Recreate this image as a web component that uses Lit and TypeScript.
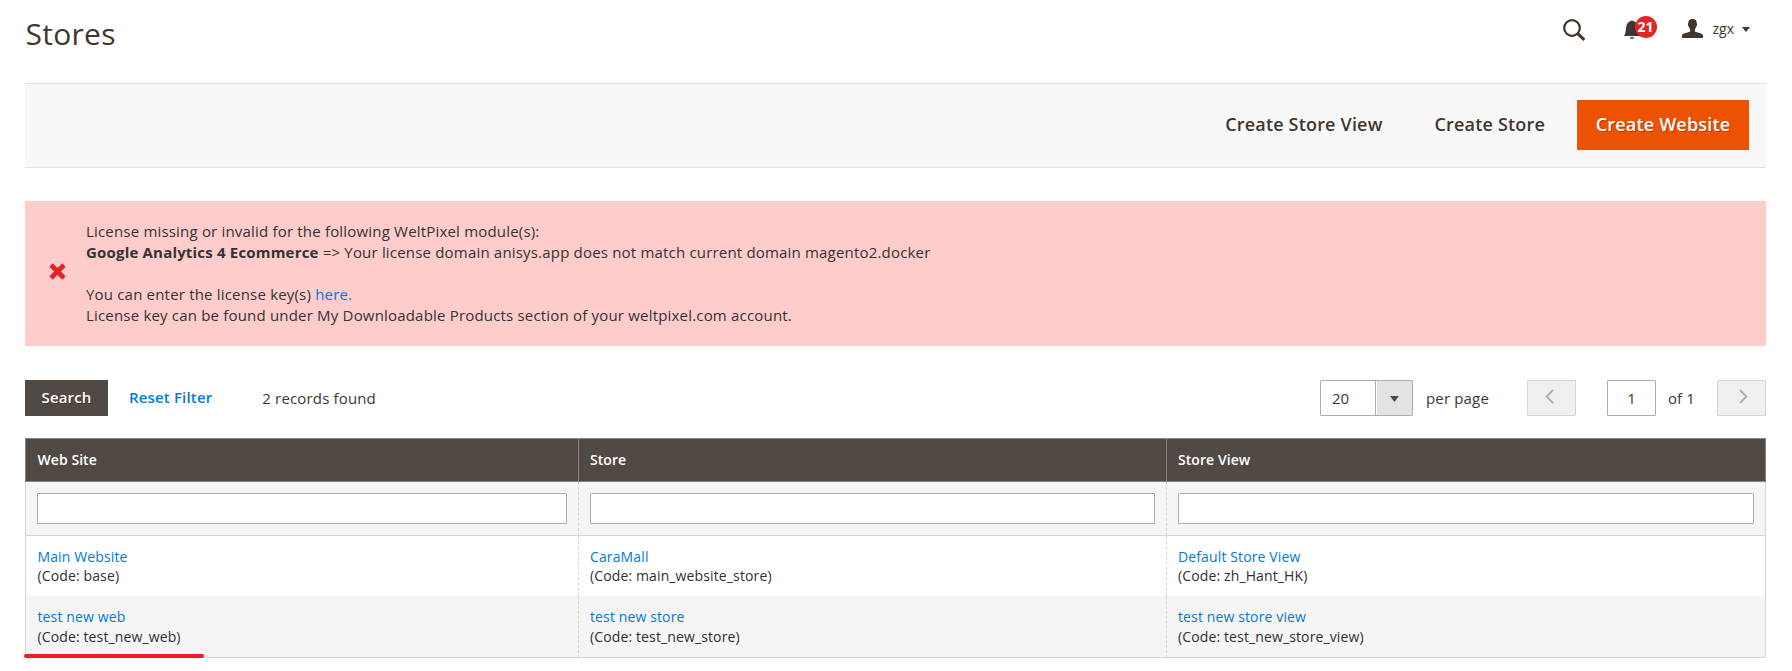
import { LitElement, html, css, svg } from "lit";
import { customElement } from "lit/decorators.js";

interface Entity {
  name: string;
  code: string;
}

const COLUMNS = ["Web Site", "Store", "Store View"];

const ROWS: Entity[][] = [
  [
    { name: "Main Website", code: "base" },
    { name: "CaraMall", code: "main_website_store" },
    { name: "Default Store View", code: "zh_Hant_HK" },
  ],
  [
    { name: "test new web", code: "test_new_web" },
    { name: "test new store", code: "test_new_store" },
    { name: "test new store view", code: "test_new_store_view" },
  ],
];

const chevron = (d: string) => html`<svg class="chevron" viewBox="0 0 9 15" width="9" height="15">
  ${svg`<path d=${d} fill="none" stroke="#adadad" stroke-width="1.8"/>`}
</svg>`;

@customElement("store-header")
export class StoreHeader extends LitElement {
  static styles = css`
    :host { display: flex; justify-content: space-between; height: 83px; color: #41362f; }
    .title { margin: 0; padding: 14px 0 0 0.6px; font-size: 30px; font-weight: 400; line-height: 40px; letter-spacing: 0.25px; }
    .tools { display: flex; align-items: flex-start; padding: 14px 16px 0 0; height: 30px; }
    .search { margin: 5px 38px 0 0; }
    .bell { position: relative; margin: 6px 42px 0 0; width: 16px; height: 20px; }
    .badge {
      position: absolute; left: 11px; top: -4px; width: 22px; height: 22px; border-radius: 50%;
      background: #e22626; color: #fff; font-size: 14px; font-weight: 700; line-height: 22px; text-align: center;
    }
    .user { margin: 5px 10px 0 0; }
    .name { font-size: 14px; line-height: 30px; }
    .caret { margin: 13px 0 0 8px; }
    svg { display: block; }
  `;
  render() {
    return html`
      <h1 class="title">Stores</h1>
      <div class="tools">
        <svg class="search" width="23" height="22" viewBox="0 0 23 22" fill="none" stroke="#41362f">
          <circle cx="9" cy="9" r="7.8" stroke-width="2.2" />
          <path d="M14.5 14.3L21.3 20.8" stroke-width="3" />
        </svg>
        <div class="bell">
          <svg width="16" height="20" viewBox="0 0 16 20" fill="#41362f">
            <path d="M0 16C1.6 13.6 1.7 11 2 8C2.3 4.5 3.8 2.3 6 1.6L6.3 .8H9.7L10 1.6C12.2 2.3 13.7 4.5 14 8C14.3 11 14.4 13.6 16 16Z" />
            <path d="M5.8 17.3H10.2C9.7 19.3 6.3 19.3 5.8 17.3Z" />
          </svg>
          <span class="badge">21</span>
        </div>
        <svg class="user" width="21" height="19" viewBox="0 0 21 19" fill="#41362f">
          <path d="M10.5 0C13.5 0 15 1.7 14.8 4.6C15.4 5 15 7 14.4 7.2C14.1 8.6 13.5 9.5 12.9 10.1V12.4C16 14 21 13.9 21 16.6V19H0V16.6C0 13.9 5 14 8.1 12.4V10.1C7.5 9.5 6.9 8.6 6.6 7.2C6 7 5.6 5 6.2 4.6C6 1.7 7.5 0 10.5 0Z" />
        </svg>
        <span class="name">zgx</span>
        <svg class="caret" width="8" height="5" viewBox="0 0 8 5"><path d="M0 0H8L4 5Z" fill="#41362f" /></svg>
      </div>
    `;
  }
}

@customElement("store-actions")
export class StoreActions extends LitElement {
  static styles = css`
    :host {
      box-sizing: border-box; display: flex; justify-content: flex-end; align-items: flex-start; height: 85px;
      padding: 16px 17px 0 0; background: #f8f8f8; border: solid #e3e3e3; border-width: 1px 0;
    }
    button {
      box-sizing: border-box; height: 50px; padding: 0 0 2px; border: 0; background: none; color: #41362f; font: inherit;
      font-size: 18px; font-weight: 600; letter-spacing: 0.18px; line-height: 48px; white-space: nowrap;
    }
    .view { margin-right: 52px; }
    .store { margin-right: 32px; }
    .primary { width: 172px; background: #eb5202; color: #fff; text-shadow: 1px 1px 0 rgba(0, 0, 0, 0.25); }
  `;
  render() {
    return html`
      <button class="view">Create Store View</button>
      <button class="store">Create Store</button>
      <button class="primary">Create Website</button>
    `;
  }
}

@customElement("license-alert")
export class LicenseAlert extends LitElement {
  static styles = css`
    :host {
      box-sizing: border-box; display: flex; align-items: center; height: 145px; margin-top: 33px;
      padding-left: 24px; background: #ffcccc; color: #333;
    }
    svg { margin: 0 0 4px 0.3px; }
    .text { margin-left: 19.7px; font-size: 15px; line-height: 21px; letter-spacing: 0.188px; }
    .text p { margin: 0; }
    .gap { height: 21px; }
    b { font-weight: 700; }
    a { color: #007bdb; }
  `;
  render() {
    return html`
      <svg width="17" height="17" viewBox="0 0 17 17">
        <path d="M2 2L15 15M15 2L2 15" stroke="#e22626" stroke-width="4.8" />
      </svg>
      <div class="text">
        <p>License missing or invalid for the following WeltPixel module(s):</p>
        <p><b>Google Analytics 4 Ecommerce</b> =&gt; Your license domain anisys.app does not match current domain magento2.docker</p>
        <div class="gap"></div>
        <p>You can enter the license key(s) <a>here.</a></p>
        <p>License key can be found under My Downloadable Products section of your weltpixel.com account.</p>
      </div>
    `;
  }
}

@customElement("grid-controls")
export class GridControls extends LitElement {
  static styles = css`
    :host { display: flex; height: 36px; margin: 34px 0 22px; font-size: 15px; line-height: 36px; color: #41362f; white-space: nowrap; }
    button { box-sizing: border-box; height: 36px; padding: 0 0 2px; border: 0; font: inherit; font-weight: 600; line-height: 34px; letter-spacing: 0.16px; }
    .search { width: 83px; background: #514943; color: #fff; text-shadow: 1px 1px 0 rgba(0, 0, 0, 0.25); }
    .reset { margin-left: 21px; background: none; color: #007bdb; }
    .found { margin-left: 50px; letter-spacing: 0.16px; }
    .pager { display: flex; margin-left: auto; }
    .select { box-sizing: border-box; display: flex; width: 93px; border: 1px solid #adadad; border-radius: 1px; background: #fff; line-height: 34px; }
    .value { flex: 1; padding-left: 11px; }
    .arrow { box-sizing: border-box; display: flex; align-items: center; justify-content: center; width: 37px; padding-top: 2px; background: #e3e3e3; border-left: 1px solid #adadad; box-shadow: inset 1px 0 #fff; }
    .per { box-sizing: border-box; width: 114px; padding-left: 13px; letter-spacing: 0.16px; }
    .nav { display: flex; justify-content: center; width: 49px; padding: 8px 0 0; background: #f0f0f0; border: 1px solid #d6d6d6; border-radius: 1px; }
    .prev { padding-right: 4px; }
    .next { padding-left: 3px; }
    .page { box-sizing: border-box; width: 49px; margin-left: 31px; border: 1px solid #adadad; border-radius: 1px; line-height: 34px; text-align: center; }
    .of { box-sizing: border-box; width: 61px; padding-left: 12px; letter-spacing: 0.1px; }
  `;
  render() {
    return html`
      <button class="search">Search</button>
      <button class="reset">Reset Filter</button>
      <span class="found">2 records found</span>
      <div class="pager">
        <div class="select">
          <span class="value">20</span>
          <span class="arrow"><svg width="9" height="6" viewBox="0 0 9 6"><path d="M0 0H9L4.5 6Z" fill="#514943" /></svg></span>
        </div>
        <span class="per">per page</span>
        <button class="nav prev" aria-label="Previous">${chevron("M8 1L1.6 7.5L8 14")}</button>
        <div class="page">1</div>
        <span class="of">of 1</span>
        <button class="nav next" aria-label="Next">${chevron("M1 1L7.4 7.5L1 14")}</button>
      </div>
    `;
  }
}

@customElement("store-grid")
export class StoreGrid extends LitElement {
  static styles = css`
    :host { position: relative; display: block; font-size: 14px; color: #303030; }
    .row { display: grid; grid-template-columns: 553fr 588fr 600fr; }
    .row > div { box-sizing: border-box; padding: 0 11px; border-left: 1px dashed #d6d6d6; letter-spacing: 0.125px; }
    .row > div:first-child { border-left: 1px solid #d6d6d6; }
    .row > div:last-child { border-right: 1px solid #d6d6d6; }
    .row.head > div { height: 44px; background: #514943; border: 1px solid #8a837f; border-right-width: 0; color: #fff; font-weight: 600; line-height: 41px; letter-spacing: 0.06px; }
    .row.head > div:last-child { border-right-width: 1px; }
    .filter > div { height: 54px; padding-top: 11px; background: #f5f5f5; border-bottom: 1px solid #d6d6d6; }
    input { display: block; box-sizing: border-box; width: 100%; height: 31px; margin: 0; border: 1px solid #adadad; border-radius: 1px; background: #fff; }
    .data > div { height: 60px; padding-top: 11px; line-height: 19px; }
    .data.even > div { height: 62px; line-height: 20px; padding-top: 11px; background: #f5f5f5; border-bottom: 1px solid #d6d6d6; }
    .row.head > div:first-child, .data > div:first-child { padding-left: 11.5px; }
    a { display: block; color: #007bdb; }
    .code { display: block; }
    .mark { position: absolute; left: -1px; bottom: 0; width: 180px; height: 4px; border-radius: 2px; background: #ed1c24; }
  `;
  render() {
    return html`
      <div class="row head">${COLUMNS.map((c) => html`<div>${c}</div>`)}</div>
      <div class="row filter">${COLUMNS.map((c) => html`<div><input aria-label=${c} /></div>`)}</div>
      ${ROWS.map(
        (row, i) => html`<div class="row data ${i % 2 ? "even" : ""}">
          ${row.map((e) => html`<div><a>${e.name}</a><span class="code">(Code: ${e.code})</span></div>`)}
        </div>`
      )}
      <div class="mark"></div>
    `;
  }
}

@customElement("app-root")
export class AppRoot extends LitElement {
  static styles = css`
    :host {
      box-sizing: border-box; display: block; height: 671px; padding: 0 26px 0 25px; overflow: hidden;
      background: #fff; font-family: "Open Sans", "Noto Sans", sans-serif;
    }
  `;
  render() {
    return html`
      <store-header></store-header>
      <store-actions></store-actions>
      <license-alert></license-alert>
      <grid-controls></grid-controls>
      <store-grid></store-grid>
    `;
  }
}
